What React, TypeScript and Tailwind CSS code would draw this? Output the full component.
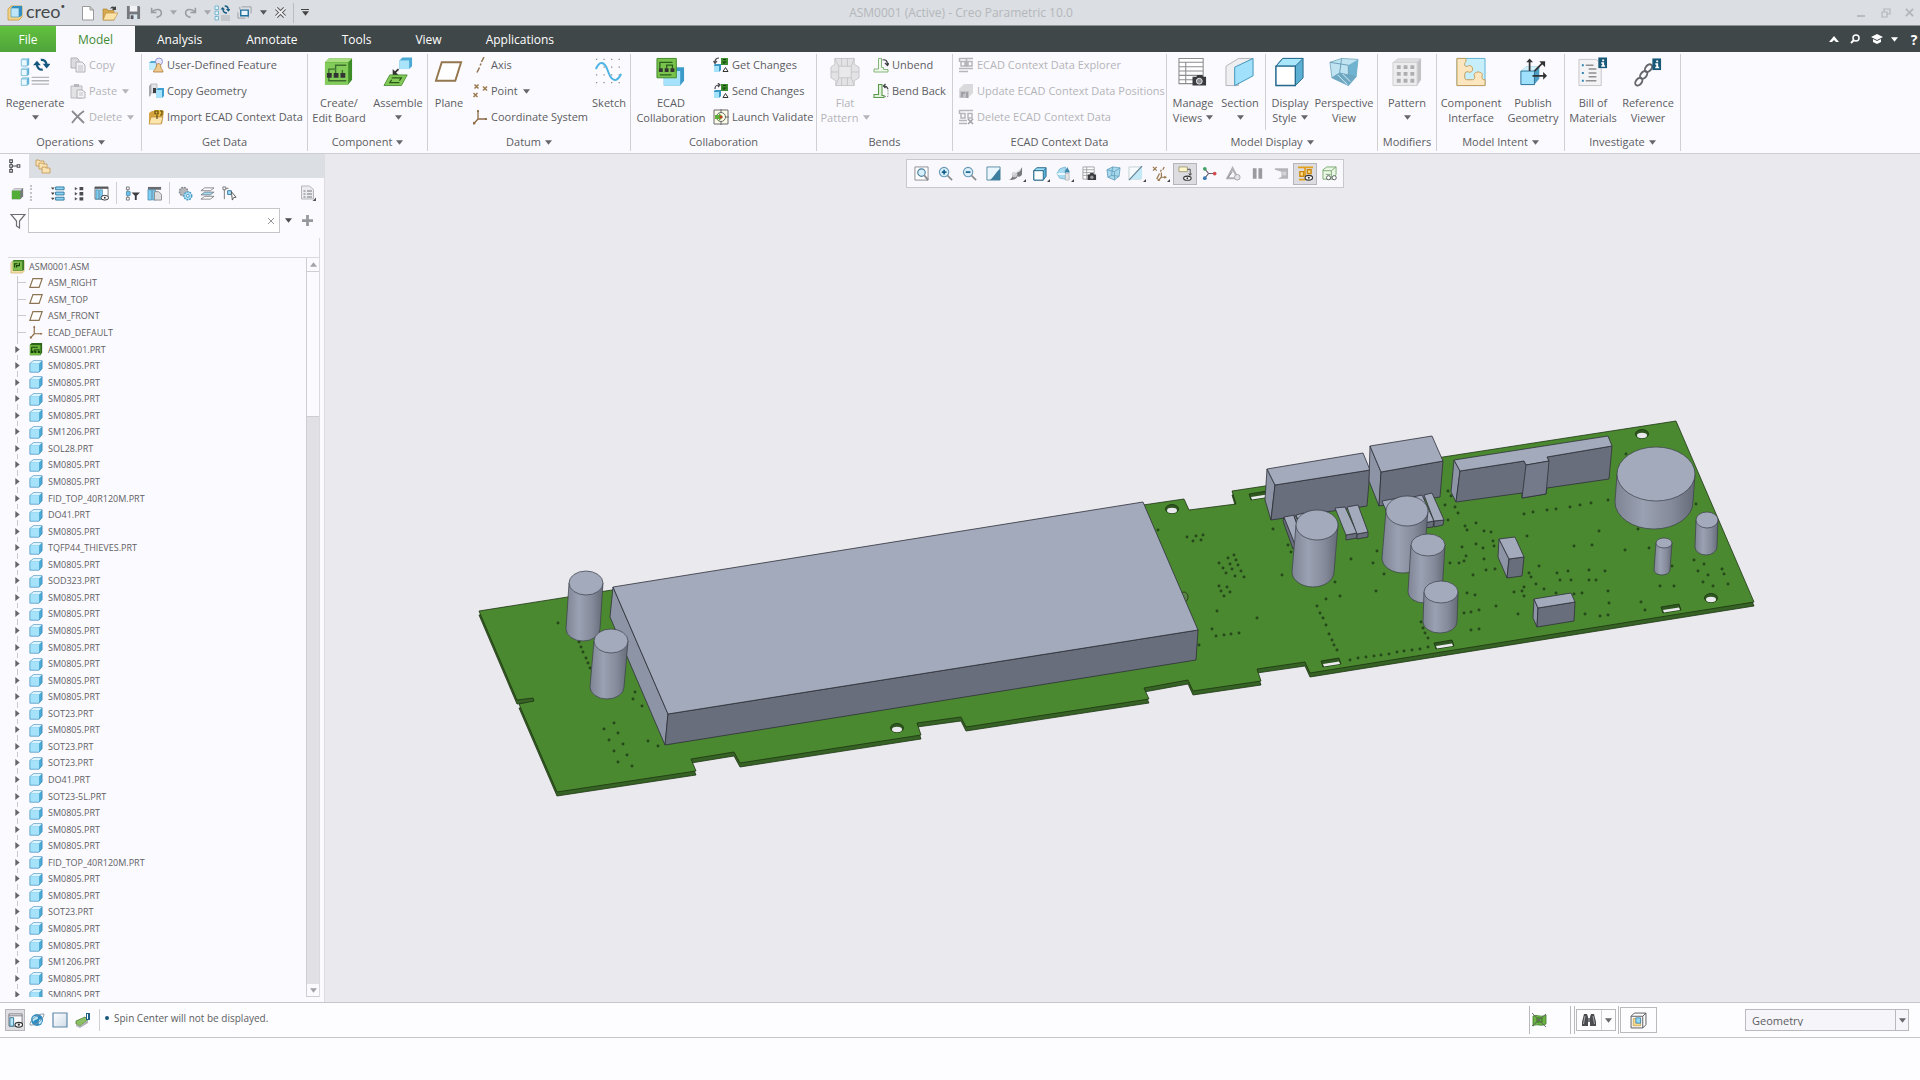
import { useState, type ReactNode } from 'react'
import clsx from 'clsx'

const paths: Record<string, ReactNode> = {
  logo: (
    <>
      <path d="M1 4l3-3h11v11l-3 3H1z" fill="#f3d48a" stroke="#c79a3e" strokeWidth=".8" />
      <path d="M4 3l2-2h9v9l-2 2H4z" fill="#2f8fc4" />
      <path d="M4 3h8v9H4z" fill="#bfe6f8" stroke="#3b8fbb" strokeWidth=".6" />
    </>
  ),
  newDoc: <path d="M2.500 1.500h7.500l3.500 3.500v10H2.500zM10 1.500v3.500h3.500" fill="#fff" stroke="#999" strokeWidth="1" />,
  open: (
    <>
      <path d="M1 15V4h4l1 1.500h6V15z" fill="#d9a94e" stroke="#a8792c" strokeWidth=".6" />
      <path d="M1 15l3-7h12l-4 7z" fill="#fbe3a8" stroke="#b98a3a" strokeWidth=".6" />
      <path d="M8 4c1-3 3-3 5-2l1-1v4h-4l1.200-1.200C10 3 9 3 8 4z" fill="#444" />
    </>
  ),
  save: (
    <>
      <path d="M1 1h13l1 1v13H1z" fill="#77797f" />
      <path d="M4 1h8v6H4z" fill="#f2f3f6" />
      <path d="M4 10h8v5H4z" fill="#d7e5ef" />
      <path d="M5 11h3v4H5z" fill="#55575c" />
    </>
  ),
  undo: <path d="M2 2v6h6M2.500 7.500C6 3 14 3 14 8.500c0 3-2.500 4.500-6 5.500" fill="none" stroke="#9a9da1" strokeWidth="2" />,
  redo: <path d="M14 2v6H8M13.500 7.500C10 3 2 3 2 8.500c0 3 2.500 4.500 6 5.500" fill="none" stroke="#9a9da1" strokeWidth="2" />,
  regenSmall: (
    <>
      <path d="M1 1h3.500v3.500H1zM1 6.200h3.500v3.500H1zM1 11.500h3.500V15H1z" fill="#e0f5fd" stroke="#62a7c8" strokeWidth=".8" />
      <path d="M7 11h9M7 13h9M7 15h9" stroke="#a9abaf" strokeWidth=".9" />
      <path d="M6.500 4.500h4.500L8.700 2zM16.500 4h-4.500l2.300 2.800z" fill="#155d85" />
      <path d="M9 4c0 3 2 4 4 4M14.200 4.500c0-3-1.500-3.500-3.500-3.500" fill="none" stroke="#155d85" strokeWidth="1.400" />
    </>
  ),
  windows: (
    <>
      <path d="M5 2h10v7M1 8v6h8" fill="none" stroke="#9b9ea3" />
      <path d="M3 2v3M12 11v3" stroke="#9b9ea3" />
      <path d="M4 5.500h8v6H4z" fill="#e8f6fc" stroke="#20709c" strokeWidth="1.500" />
    </>
  ),
  closeWin: (
    <>
      <path d="M2 2l12 12M14 2L2 14" stroke="#5a5b5f" strokeWidth="5.500" />
      <path d="M1.500 1.500l13 13M14.500 1.500l-13 13" stroke="#f0f1f3" strokeWidth="2.600" />
    </>
  ),
  copy: (
    <>
      <path d="M1 1h6l2 2v8H1z" fill="#dcdce0" stroke="#b2b2b6" />
      <path d="M6 5h6l3 3v7H6z" fill="#f0f0f3" stroke="#b2b2b6" />
      <path d="M8 9h5M8 11h5M8 13h5" stroke="#c2c2c6" />
    </>
  ),
  paste: (
    <>
      <path d="M1 3h11v12H1z" fill="#e2e2e5" stroke="#bbbbbf" />
      <path d="M4 1h5v3H4z" fill="#b8b8bc" />
      <path d="M7 7h5l3 2v6H7z" fill="#f3f3f6" stroke="#b2b2b6" />
      <path d="M9 10h4M9 12h4" stroke="#c2c2c6" />
    </>
  ),
  del: <path d="M2 2l12 12M14 2c-3 2-9 8-12 12" stroke="#8b8b8f" strokeWidth="1.800" fill="none" />,
  udf: (
    <>
      <path d="M1 6l2-2h7v7l-2 2H1z" fill="#52a9d4" />
      <path d="M1 6h7v7H1z" fill="#c2ebfb" />
      <circle cx="11" cy="4.500" r="3.500" fill="#e6e6fb" stroke="#7d7fc0" strokeWidth=".8" />
      <path d="M5.500 15c0-2 2-2.500 2.500-4.500C8.500 7.500 9 6.500 10.500 6.500s2 1 2.500 4c.5 2 2 2.500 2 4.500z" fill="#efc98e" stroke="#a97a35" strokeWidth=".8" />
    </>
  ),
  copyGeom: (
    <>
      <path d="M1 3l2-2v11l-2 2z" fill="#a7a9ad" />
      <path d="M3 1h6v9H3z" fill="#e3e4e8" stroke="#a7a9ad" strokeWidth=".7" />
      <path d="M5 5h3v5H5z" fill="#3d3f43" />
      <path d="M8 7l2-2h6v8l-2 2H8z" fill="#3f9fcf" />
      <path d="M8 7h6v8H8z" fill="#a6e2fb" />
    </>
  ),
  importEcad: (
    <>
      <path d="M1 15V4l3-2h12l-2 13z" fill="#d5a33f" />
      <path d="M1 15l2-7h12l-2 7z" fill="#fbe5ad" stroke="#b98a3a" strokeWidth=".7" />
      <path d="M6 1h9v6H6z" fill="#e8b93c" />
      <path d="M7 2h3v3H7zM12 2h2v4h-2M9 6v4" fill="none" stroke="#5d4a15" strokeWidth="1.200" />
    </>
  ),
  axis: <path d="M12 0L9.500 5M9 6.500l-.8 2M7.500 10.500L5 15.500" stroke="#94754f" strokeWidth="1.500" />,
  point: (
    <path
      d="M2.500 1.500l4 4M6.500 1.500l-4 4M11 3.500l4 4M15 3.500l-4 4M1.500 10l4 4M5.500 10l-4 4"
      stroke="#9b7a50"
      strokeWidth="1.500"
    />
  ),
  csys: (
    <>
      <path d="M6 1v9h9M6 10l-4.500 5" fill="none" stroke="#8b6a45" strokeWidth="1.300" />
      <path d="M4.800 3L6 .5 7.200 3M13 8.800L15.500 10 13 11.200M1 12.500v3l3-.4" fill="#8b6a45" />
    </>
  ),
  getChanges: (
    <>
      <path d="M8 1h7v7H8z" fill="#3f8f2e" />
      <path d="M10 2.500h3M9.500 5h4M11 5v2" stroke="#123c0a" />
      <path d="M6 1C3 1 2 3 2 5M.5 4L2 6.500 4 4" fill="none" stroke="#444" strokeWidth="1.200" />
      <path d="M1 8l1-1h6v6l-2 2H1z" fill="#3a98c5" />
      <path d="M1 9h5v6H1z" fill="#a6e2fb" />
      <path d="M10 14.500l2.500-4 2.500 4z" fill="#fff" stroke="#333" />
    </>
  ),
  sendChanges: (
    <>
      <path d="M8 1h7v7H8z" fill="#3f8f2e" />
      <path d="M10 2.500h3M9.500 5h4M11 5v2" stroke="#123c0a" />
      <path d="M2 6c0-3 1-4 4-4M5 0l2 2-2 2" fill="none" stroke="#444" strokeWidth="1.200" />
      <path d="M1 8l1-1h6v6l-2 2H1z" fill="#3a98c5" />
      <path d="M1 9h5v6H1z" fill="#a6e2fb" />
      <path d="M10 14.500l2.500-4 2.500 4z" fill="#fff" stroke="#333" />
    </>
  ),
  validate: (
    <>
      <path d="M1 1h14v14H1z" fill="#fbfbe8" stroke="#6a6b6e" />
      <circle cx="8" cy="8" r="4.500" fill="none" stroke="#6a6b6e" />
      <path d="M8 0v4M8 12v4M12 8h4" stroke="#6a6b6e" />
      <path d="M2 6h4V4l4 4-4 4v-2H2z" fill="#5fae35" />
      <circle cx="8" cy="8" r="1.500" fill="#c23b22" />
    </>
  ),
  unbend: (
    <>
      <path d="M5.500 1.500h3v9h2v2h4.500v2.500H1V12h4.500z" fill="#eef8eb" stroke="#86b57a" strokeWidth="1" />
      <path d="M9.500 3c3-1 5 1 5 4.500M12 6l2.500 2.500L16 6" fill="none" stroke="#3d3f43" strokeWidth="1.200" />
    </>
  ),
  bendBack: (
    <>
      <path d="M5.500 1.500h3.500v11h2v2H1V11.500h4.500z" fill="#e2f3dd" stroke="#5c9a4b" strokeWidth="1.100" />
      <path d="M11 13.500h4V6" fill="none" stroke="#9a9b9f" strokeDasharray="2 1" />
      <path d="M15 6c-1-3-3-3-4-3M12.500 1l-2 2 2 2" fill="none" stroke="#3d3f43" strokeWidth="1.200" />
    </>
  ),
  ecadExplorer: (
    <path d="M1 1.500h14M1.500 1v4M3 4.500h4v4.500H3zM10 4.500h4v4.500h-4zM8.500 1v9M1 11.500h14M1 14.500h9" fill="none" stroke="#b6b6ba" strokeWidth="1.500" />
  ),
  ecadUpdate: (
    <>
      <path d="M1 6l5-5h9v9l-5 5H1z" fill="#dadadd" />
      <path d="M2 8h9v7H2z" fill="#c3c3c7" />
      <path d="M4 14v-4h3M9 9v6" stroke="#98989c" strokeWidth="1.500" fill="none" />
    </>
  ),
  ecadDelete: (
    <>
      <path d="M1 1.500h14M1.500 1v4M3 4.500h4v4.500H3zM10 4.500h4v4.500h-4zM1 11.500h8M1 14.500h8" fill="none" stroke="#b6b6ba" strokeWidth="1.500" />
      <path d="M10 10l5 5M15 10l-5 5" stroke="#a2a2a6" strokeWidth="1.600" />
    </>
  ),
  tree: <path d="M2 1h3v3H2zM2 6.500h3v3H2zM2 12h3v3H2zM3.500 4v2.500M3.500 9.500V12M5 8h5M10.500 6.500h3v3h-3z" fill="none" stroke="#4a4b4f" strokeWidth="1.200" />,
  folders: (
    <g fill="#fae3b2" stroke="#bf9450" strokeWidth=".8">
      <path d="M1 2h3l1 1h4v5H1z" />
      <path d="M4 5h3l1 1h4v5H4z" />
      <path d="M7 9h3l1 1h4v5H7z" />
    </g>
  ),
  greenCube: (
    <>
      <path d="M2 5l3-3h9v9l-3 3H2z" fill="#77797c" />
      <path d="M4.500 2.500h9L11 5H2z" fill="#d4d5d8" />
      <path d="M2 5h9v9H2z" fill="#52ad37" />
    </>
  ),
  expandList: (
    <>
      <path d="M6 1h9v3H6zM6 6.500h9v3H6zM6 12h9v3H6z" fill="#8fd5f5" stroke="#31789c" />
      <path d="M1 1.500h4L3 4zM1 7h4L3 9.500zM1 12.500h4L3 15z" fill="#444" />
    </>
  ),
  collapseList: (
    <>
      <path d="M8 1h4v3.500H8zM8 6.500h4V10H8zM8 12h4v3.500H8z" fill="#4b4c50" />
      <path d="M3 1v3.500L6 3zM3 6.500V10l3-1.700zM3 12v3.500l3-1.800z" fill="#555" />
    </>
  ),
  columns: (
    <>
      <path d="M1 1h14v13H1z" fill="#fff" stroke="#777" />
      <path d="M1 1h14v2H1z" fill="#55565a" />
      <path d="M2 4h3v10H2zM6 4h3v10H6z" fill="#7fcdf2" stroke="#31789c" strokeWidth=".6" />
      <ellipse cx="11.500" cy="12.500" rx="4" ry="2.500" fill="#fff" stroke="#333" />
      <circle cx="11.500" cy="12.500" r="1" fill="#333" />
    </>
  ),
  treeFilter: (
    <>
      <path d="M1.500 1h3v3h-3zM1.500 12h3v3h-3zM3 4v2M3 10v2" fill="none" stroke="#777" />
      <path d="M1.500 6h4v4h-4z" fill="#6cc5ef" stroke="#31789c" strokeWidth=".7" />
      <path d="M7 7h9l-3.500 3.500V15h-2v-4.500z" fill="#3c3d40" />
    </>
  ),
  columnsDoc: (
    <>
      <path d="M1 1h14v3H1z" fill="#6a6b6f" />
      <path d="M1 4h4v11H1zM6 4h3v11H6z" fill="#7fcdf2" stroke="#31789c" strokeWidth=".6" />
      <path d="M8 6h4.500l3 3v6H8z" fill="#dededf" stroke="#8b8c90" />
    </>
  ),
  gears: (
    <>
      <circle cx="6" cy="6" r="4.500" fill="#b4b6ba" stroke="#85878b" strokeDasharray="2 1" strokeWidth="1.500" />
      <circle cx="10.500" cy="10.500" r="4.200" fill="#a8def6" stroke="#4c9bc2" strokeDasharray="2 1" strokeWidth="1.500" />
      <circle cx="10.500" cy="10.500" r="1.500" fill="#fff" stroke="#4c9bc2" />
    </>
  ),
  layers: (
    <g stroke="#7b7d81" strokeWidth=".9">
      <path d="M1 14l4-3h10l-4 3z" fill="#fff" />
      <path d="M1 9.500l4-3h10l-4 3z" fill="#9fdcf7" />
      <path d="M1 5l4-3h10l-4 3z" fill="#fff" />
    </g>
  ),
  branch: (
    <>
      <path d="M1 1h3v3H1zM2.500 4v10M4 2.500h3" fill="none" stroke="#777" />
      <path d="M6 5h4v4H6z" fill="#a6e2fb" stroke="#31789c" />
      <path d="M10 6l5 6-2.500.3L11 15z" fill="#fff" stroke="#555" />
    </>
  ),
  settingsDoc: (
    <>
      <path d="M1.500 1h8l4 3.500V14h-12z" fill="#ececef" stroke="#b6b7bb" />
      <path d="M3.500 6h2M3.500 9h2M3.500 12h2M7 6h5M7 9h5M7 12h5" stroke="#9c9da1" strokeWidth="1.300" />
      <path d="M16 12.500V16h-3.500z" fill="#555" />
    </>
  ),
  funnel: <path d="M1 1.500h14L9.500 8v7L6.500 13V8z" fill="#fdfdfe" stroke="#6b6d71" strokeWidth="1.200" />,
  asm: (
    <>
      <path d="M1 4l2-2h12v11l-2 2H1z" fill="#f5dfa6" stroke="#c3a25a" strokeWidth=".6" />
      <path d="M3 2l1-1h11v10l-1.500 1.500H3z" fill="#3c7a28" />
      <path d="M3 2.500h10v9.500H3z" fill="#7cbc4b" />
      <path d="M5 9V5h3M7 9V7h3V4" stroke="#173d0d" strokeWidth="1.200" fill="none" />
    </>
  ),
  board: (
    <>
      <path d="M1 3l2-2h12v11l-2 3H1z" fill="#2d661b" />
      <path d="M1 3.500h12V15H1z" fill="#6db53c" />
      <path d="M3 12V6h7M6 12V9h6" stroke="#16400b" strokeWidth="1.100" fill="none" />
      <path d="M2 10h3v2.500H2zM6.500 10h2v2.500h-2zM10 10h2.500v2.500H10z" fill="#16400b" />
    </>
  ),
  part: (
    <>
      <path d="M1 5l4-3h10v9l-3.500 4H1z" fill="#4ba9d6" stroke="#3786b0" strokeWidth=".7" />
      <path d="M1.500 5L5 2.400h9.500L11.500 5z" fill="#d9f4fe" />
      <path d="M1.500 5h10v9.600h-10z" fill="#a7e2fb" />
    </>
  ),
  plane: <path d="M4.500 3h10.500l-3.500 10H1z" fill="#fff" stroke="#8b7452" strokeWidth="1.400" />,
  zoomFit: (
    <>
      <path d="M1 1h14v14H1z" fill="#fff" stroke="#8b8c90" />
      <circle cx="8" cy="7" r="4" fill="#d6effa" stroke="#4a7f9e" strokeWidth="1.200" />
      <path d="M11 10l4 5" stroke="#8b8c90" strokeWidth="2" />
    </>
  ),
  zoomIn: (
    <>
      <circle cx="6.500" cy="6.500" r="5" fill="#d9f0fb" stroke="#6a98b3" strokeWidth="1.200" />
      <path d="M4 6.500h5M6.500 4v5" stroke="#17608a" strokeWidth="1.800" />
      <path d="M10 10l5 5" stroke="#8f9094" strokeWidth="2" />
    </>
  ),
  zoomOut: (
    <>
      <circle cx="6.500" cy="6.500" r="5" fill="#d9f0fb" stroke="#6a98b3" strokeWidth="1.200" />
      <path d="M4 6.500h5" stroke="#17608a" strokeWidth="1.800" />
      <path d="M10 10l5 5" stroke="#8f9094" strokeWidth="2" />
    </>
  ),
  repaint: (
    <>
      <path d="M1 1h14v14H1z" fill="#e9f7fd" stroke="#5c8ba5" />
      <path d="M15 3v12H4c4-2 5-7 11-12z" fill="#3c7f9f" />
    </>
  ),
  render: (
    <>
      <path d="M15 1v7c0 3-3 4-5 3 0 3-6 5-9 3 3 0 3-2 4-4 2-4 7-2 10-9z" fill="#77797d" />
      <circle cx="7" cy="9" r="3" fill="#c9cacd" />
      <path d="M5 9c2-3 6-2 8-5" stroke="#e4e4e7" strokeWidth="1.500" fill="none" />
    </>
  ),
  shade: (
    <>
      <path d="M2 5l3-3h10v9l-3 4H2z" fill="#5db2d8" stroke="#23678a" />
      <path d="M2 5l3-3h10l-3 3z" fill="#9fe0f9" stroke="#23678a" strokeWidth=".7" />
      <path d="M2 5h10v10H2z" fill="#fff" stroke="#23678a" />
    </>
  ),
  saved: (
    <>
      <path d="M1 8l3-5 6-2v13l-6-1z" fill="#a9dcf2" stroke="#6cb0cf" strokeWidth=".8" />
      <path d="M9 7l3-6 3 6z" fill="#3e86ab" />
      <path d="M1 7.500h9v2H2z" fill="#eaf8fe" />
      <path d="M10 8h4v7h-4z" fill="#e4e4e7" stroke="#a9aaae" strokeWidth=".7" />
    </>
  ),
  viewMgr: (
    <>
      <path d="M1 1h12v13H1zM1 4h12M1 7h12M1 10h12M5 1v13" fill="#fff" stroke="#a3a4a8" strokeWidth="1" />
      <path d="M6 9h2l1-1.500h3L13 9h2v6H6z" fill="#3a3b3e" />
      <circle cx="10.500" cy="12" r="1.800" fill="#9b9ca0" />
    </>
  ),
  persp: (
    <>
      <path d="M1 4l6-3 8 1-1 9-5 4-7-3z" fill="#a8d8ec" stroke="#5a9ab8" strokeWidth=".8" />
      <path d="M1 4l8 2 6-4M9 6v9M7 1l-1 9-4 2M6 10l8 1" fill="none" stroke="#5a9ab8" strokeWidth=".8" />
    </>
  ),
  planeDisp: (
    <>
      <path d="M1 1h13v13H1z" fill="#f7fbfd" stroke="#b9c5cb" strokeWidth=".8" />
      <path d="M15 1v12l-4 1L2 14z" fill="#c3e8f6" />
      <path d="M15 0L1 15" stroke="#5f8398" strokeWidth="1.200" />
    </>
  ),
  datums: (
    <>
      <path d="M1 1l4 4M5 1L1 5M10 4l-1 2M8 8L5 14M13 1l-1.500 3M10 7v5h5M10 12l-3 3" fill="none" stroke="#97764b" strokeWidth="1.300" />
      <path d="M13 10.500l3 1.500-3 1.500zM6 13v3h3z" fill="#97764b" />
    </>
  ),
  annot: (
    <>
      <path d="M1 1h9v5H1z" fill="#fff6cc" stroke="#a2a07f" />
      <path d="M10 3.500h3v6M11.500 8l1.500 2 1.500-2" fill="none" stroke="#444" />
      <ellipse cx="10" cy="13" rx="4" ry="2.200" fill="#fff" stroke="#333" strokeWidth="1.200" />
      <circle cx="10" cy="13" r="1" fill="#333" />
    </>
  ),
  spin: (
    <>
      <path d="M3 3l4 5 6 0M7 8l-4 5" stroke="#6a5c6c" strokeWidth="1.200" fill="none" />
      <circle cx="3" cy="3" r="2" fill="#3fa264" />
      <circle cx="13.500" cy="8" r="2" fill="#d34d4d" />
      <circle cx="3" cy="13" r="2" fill="#3c76b3" />
    </>
  ),
  simulate: (
    <>
      <path d="M1.500 13L7 2.500 12.500 13z" fill="none" stroke="#b0b0b4" strokeWidth="2.200" />
      <path d="M1.500 13L7 6" stroke="#8f8f93" />
      <circle cx="12" cy="12" r="3" fill="#e4e4e7" stroke="#a3a3a7" />
    </>
  ),
  pause: <path d="M3 2.500h4v11H3zM9 2.500h4v11H9z" fill="#9b9b9f" />,
  play: (
    <>
      <path d="M1 2.500h14v11H4l4-2V6L1 4z" fill="#b6b6ba" />
      <path d="M9 6h4v4H9z" fill="#d6d6d9" />
    </>
  ),
  ecadOn: (
    <>
      <path d="M0 1.500h16M1 14.500h7M7.500 1v10" stroke="#e2a01c" strokeWidth="1.800" />
      <path d="M2 6h4v5H2zM10 4h4v4h-4z" fill="#fde38b" stroke="#cd860e" strokeWidth="1.500" />
      <ellipse cx="11.500" cy="12.500" rx="4" ry="2.500" fill="#fff" stroke="#333" strokeWidth="1.200" />
      <circle cx="11.500" cy="12.500" r="1.100" fill="#333" />
    </>
  ),
  review: (
    <>
      <path d="M1 4l4-3h10v8l-3 5H1z" fill="#e9f5e5" stroke="#7dab71" />
      <path d="M1 5h9v8M10 5l5-4M4 9h5" fill="none" stroke="#7dab71" />
      <circle cx="7" cy="12.500" r="2.200" fill="#fff" stroke="#5b5c60" />
      <circle cx="13" cy="12.500" r="2.200" fill="#fff" stroke="#5b5c60" />
    </>
  ),
  navOn: (
    <>
      <path d="M1 1h14v13H1z" fill="#fbfbfd" stroke="#77797d" />
      <path d="M1 3h14" stroke="#77797d" />
      <path d="M2 5h4v9H2z" fill="#b9e3f6" stroke="#31789c" />
      <ellipse cx="11.500" cy="12.500" rx="4" ry="2.500" fill="#fff" stroke="#333" strokeWidth="1.200" />
      <circle cx="11.500" cy="12.500" r="1.200" fill="#333" />
    </>
  ),
  browser: (
    <>
      <circle cx="8" cy="8" r="6" fill="#2f8cc0" />
      <path d="M4 5c2-2 5-1 5 1s-3 1-4 3-2-2-1-4zM10 8c2-1 3 0 3 1s-2 4-3 3 0-2 0-4z" fill="#b7e6fa" />
      <path d="M1 13C0 9 9 1 15 2c0 5-8 12-14 11z" fill="none" stroke="#7e919d" strokeWidth=".9" />
    </>
  ),
  fullscreen: (
    <>
      <defs>
        <linearGradient id="fs" x1="0" y1="0" x2="1" y2="1">
          <stop offset="0" stopColor="#fff" />
          <stop offset="1" stopColor="#cfdbe8" />
        </linearGradient>
      </defs>
      <path d="M1 1h14v14H1z" fill="url(#fs)" stroke="#6087a6" strokeWidth="1.200" />
    </>
  ),
  scanner: (
    <>
      <path d="M1 9l9-4 3 3-8 6-4-2z" fill="#8cc065" stroke="#4f7f34" strokeWidth=".8" />
      <path d="M1 12l4 2 8-6v3l-8 5-4-2z" fill="#b0b2b5" />
      <path d="M11 1h4v7h-4z" fill="#1d5f86" />
      <path d="M12.500 2v5" stroke="#fff" />
    </>
  ),
  flag: (
    <>
      <path d="M2 4c4-2 8 2 13-1v9c-5 3-9-1-13 2z" fill="#6cb242" stroke="#3f7f2a" strokeWidth=".8" />
      <path d="M6 6h5v4H6z" fill="none" stroke="#2d6120" strokeWidth=".8" />
      <path d="M1 1l14 14M15 2L1 14" stroke="#5f6163" strokeWidth=".9" />
    </>
  ),
  binoc: (
    <>
      <path d="M3 2h3l1 3v9H1v-4zM13 2h-3L9 5v9h6v-4z" fill="#4b4c50" />
      <path d="M7 6h2v4H7z" fill="#77797d" />
      <path d="M4 4L2.500 12M12 4l1.500 8" stroke="#a9aaae" strokeWidth="1" />
    </>
  ),
  cubeBox: (
    <>
      <path d="M1 4l3-3h11v11l-3 3H1zM1 4h11v11M12 4l3-3" fill="#fff" stroke="#55565a" strokeWidth=".9" />
      <path d="M3 6h7v7H3z" fill="#f8d98c" stroke="#b88f38" strokeWidth=".6" />
      <path d="M5.500 5.500H10v5H5.500z" fill="#8fd8f8" stroke="#2b7ba5" strokeWidth=".7" />
    </>
  ),
}

const large: Record<string, ReactNode> = {
  regenerate: (
    <>
      {[0, 10, 20].map(y => (
        <g key={y}>
          <path d={`M1 ${y + 2}l2-1.500h6.500V${y + 7.500}l-2 1.500H1z`} fill="#5fb3d9" />
          <path d={`M1 ${y + 2}l2-1.500h6.500l-2 1.500z`} fill="#b4dced" />
          <path d={`M1.300 ${y + 2.300}h6V${y + 8.700}h-6z`} fill="#e9f9ff" stroke="#7db9d4" strokeWidth=".7" />
        </g>
      ))}
      <path d="M12 20.500h18M12 24h18M12 27.500h18" stroke="#b4b5b9" strokeWidth="1.400" />
      <path d="M17.500 7c0 4 3 6 6 5.500M27.500 8c0-4-3-6-6-5.500" fill="none" stroke="#14587e" strokeWidth="2.400" />
      <path d="M13.500 8h8l-4-4.500zM23.500 6.500h8l-4 5z" fill="#14587e" />
    </>
  ),
  createBoard: (
    <>
      <path d="M1 5l4-4h24v22l-4 5H1z" fill="#3d8c27" />
      <path d="M1 5l4-4h24l-4 4z" fill="#a8de7e" />
      <path d="M1 5h24v23H1z" fill="#84cc59" />
      <path d="M5 17v-5h7V8h11M12 17v-4M19 17v-4M5 20v4h18" fill="none" stroke="#3c6f2d" strokeWidth="1.400" />
      <path d="M3 16h5v5H3zM10 16h5v5h-5zM17 16h5v5h-5z" fill="#333" />
    </>
  ),
  assemble: (
    <>
      <path d="M17 3l3-3h10v9l-3 3H17z" fill="#4ba9d6" />
      <path d="M17 3h10v9H17z" fill="#aae4fb" />
      <path d="M16 12l-4 4" stroke="#333" strokeWidth="1.800" />
      <path d="M10 12v6h6z" fill="#333" />
      <path d="M7 18h18l-6 11H1z" fill="#83c957" stroke="#3a8124" strokeWidth=".8" />
      <path d="M9 21h10l-2 3M17 26H7l2-3" fill="none" stroke="#285a19" strokeWidth="1.300" />
    </>
  ),
  plane: <path d="M8 5h20l-6 19H2z" fill="#fff" stroke="#94774f" strokeWidth="2" />,
  sketch: (
    <>
      <path d="M2 2h27M2 10h27M2 18h27M2 26h27" stroke="#8b8c90" strokeWidth="1.300" strokeDasharray="1.300 6.500" />
      <path d="M2 12C6 2 11 5 14 13s5 11 9 10c3-1 4-4 5-6" fill="none" stroke="#4fb4e4" strokeWidth="2" />
    </>
  ),
  ecadCollab: (
    <>
      <path d="M8 14l4-4h17v14l-4 5H8z" fill="#3d9bc9" />
      <path d="M8 14h17v15H8z" fill="#a6e2fb" />
      <path d="M1 1h20v20H1z" fill="#79c34c" stroke="#3f8a29" />
      <path d="M4 11V5h13M11 11V8h6v3M4 18h12" fill="none" stroke="#2a5f1c" strokeWidth="1.300" />
      <path d="M3 11h4v4H3zM9 11h4v4H9zM15 11h4v4h-4z" fill="#333" />
    </>
  ),
  flat: (
    <g fill="#e3e3e6" stroke="#c6c6ca">
      <path d="M5 1h20v6l5 3v11l-5 3v5H6v-5l-5-3V10l4-3z" />
      <path d="M9 9h13v12H9zM9 9L5 1M22 9l3-8M9 21l-3 8M22 21l3 8M12 1v8M18 1v8M12 21v8M18 21v8M1 15h8M22 15h8" fill="#e9e9ec" />
    </g>
  ),
  manageViews: (
    <>
      <path d="M1 1h25v26H1zM1 5h25M1 9.500h25M1 14h25M1 18.500h25M1 23h25M8 5v22" fill="#fff" stroke="#8b8c90" strokeWidth="1.100" />
      <path d="M15 20h4l1-2h5l1 2h3v9H15z" fill="#3a3b3e" />
      <circle cx="22" cy="24.500" r="3" fill="#8f9094" stroke="#e8e8ea" />
    </>
  ),
  section: (
    <>
      <path d="M1 9l13-8 15 0-15 9v19H1z" fill="#efeff2" stroke="#b3b4b8" />
      <path d="M10 10L29 1v18L10 29z" fill="#a2e1fb" stroke="#3f93bb" />
    </>
  ),
  display: (
    <>
      <path d="M1 9l7-8h21v20l-8 8H1z" fill="#5cafd3" stroke="#246a8f" />
      <path d="M1 9l7-8h21l-8 8z" fill="#a9e6fc" stroke="#246a8f" />
      <path d="M1 9h20v20H1z" fill="#fff" stroke="#246a8f" strokeWidth="1.400" />
    </>
  ),
  perspective: (
    <>
      <path d="M1 5L13 1l17 1-2 18-8 9L3 21z" fill="#bfe3f1" stroke="#7fb0c6" />
      <path d="M20 8L30 2l-2 18-8 9z" fill="#6fb3d0" />
      <path d="M1 5l19 3v21M13 1l-2 15-8 5M11 16l17 4" fill="none" stroke="#6c9fb7" />
      <path d="M3 21l8-5 17 4-8 9z" fill="#6da7c1" />
      <path d="M9 18l10 10M14 17l8 8" stroke="#d7eef7" />
    </>
  ),
  pattern: (
    <>
      <path d="M1 5l5-4h24v22l-4 6H1z" fill="#c2c2c5" />
      <path d="M1 5l5-4h24l-4 4z" fill="#dedee1" />
      <path d="M1 5h25v24H1z" fill="#ececee" stroke="#cfcfd2" />
      {[8, 15, 22].map(y => (
        <path key={y} d={`M5 ${y}h4v4H5zM12 ${y}h4v4h-4zM19 ${y}h4v4h-4z`} fill="#aeaeb2" />
      ))}
    </>
  ),
  compInterface: (
    <>
      <path d="M1 1h29v28H1z" fill="#c6effb" stroke="#5fb0d2" />
      <path
        d="M1 1h9c1 2 0 4-1 5-1 2 1 4 3 3s4-1 5 2-2 5-4 4-4 0-4 3 0 5 2 5h6c2 0 3-2 2-4s1-4 4-4 5 2 4 4 0 4 3 4v6H1z"
        fill="#fbe6bf"
        stroke="#c49a55"
      />
    </>
  ),
  publish: (
    <>
      <path d="M3 14l6-5h13v13l-5 6H3z" fill="#4f9fc4" />
      <path d="M3 14l6-5h13l-5 5z" fill="#d2f0fb" />
      <path d="M3 14h14v14H3z" fill="#9fe1fc" stroke="#2e7396" />
      <path d="M12 14V3M17 14l9-9M15 19h14" stroke="#333" strokeWidth="1.800" />
      <path d="M8.500 5L12 1l3.500 4zM22 4h6v6zM26 15l4 4-4 4z" fill="#333" />
    </>
  ),
  bom: (
    <>
      <path d="M1 2h18l5 5v22H1z" fill="#f3f3f5" stroke="#c6c6ca" />
      <path d="M8 8h8M11 12h8M11 16h8M11 20h8M8 24h11" stroke="#8f9094" strokeWidth="1.500" />
      <path d="M4 7h2v2H4zM4 15h2v2H4zM4 23h2v2H4z" fill="#2f86b5" />
      <path d="M21 0h9v11h-9z" fill="#175777" />
      <path d="M25 2h2v2h-2zM24 5h3v3h1v1.500h-4V8h1V6.500h-1z" fill="#fff" />
    </>
  ),
  refViewer: (
    <>
      <g fill="none" stroke="#66676b" strokeWidth="2">
        <ellipse cx="6" cy="25" rx="4.500" ry="3" transform="rotate(-50 6 25)" />
        <ellipse cx="11" cy="18" rx="4.500" ry="3" transform="rotate(-50 11 18)" />
        <ellipse cx="16" cy="11" rx="4.500" ry="3" transform="rotate(-50 16 11)" />
      </g>
      <path d="M20 1h9v12h-9z" fill="#175777" />
      <path d="M24 3h2v2h-2zM23 6h3v3.500h1V11h-4V9.500h1v-2h-1z" fill="#fff" />
    </>
  ),
}

function Icon({ name, className = 'size-4' }: { name: string; className?: string }) {
  return (
    <svg viewBox="0 0 16 16" className={clsx('shrink-0', className)} aria-hidden="true">
      {paths[name]}
    </svg>
  )
}

function Caret({ className = 'text-[#66676b]' }: { className?: string }) {
  return (
    <svg viewBox="0 0 8 5" className={clsx('w-[7px] h-[5px] shrink-0', className)} aria-hidden="true">
      <path d="M0 0h8L4 5z" fill="currentColor" />
    </svg>
  )
}

interface BigProps {
  icon: string
  lines: string[]
  width: string
  caret?: 'inline' | 'below'
  disabled?: boolean
}

function BigButton({ icon, lines, width, caret, disabled }: BigProps) {
  return (
    <button
      disabled={disabled}
      className={clsx('flex shrink-0 flex-col items-center pt-[5px] whitespace-nowrap', width, disabled && 'text-[#b4b4b8]')}
    >
      <svg viewBox="0 0 31 30" className="size-[30px] shrink-0" aria-hidden="true">
        {large[icon]}
      </svg>
      <span className="mt-2 h-[15px] leading-[15px]">{lines[0]}</span>
      <span className="flex h-[15px] items-center gap-1 leading-[15px]">
        {lines[1]}
        {caret && <Caret className={disabled ? 'text-[#b4b4b8]' : 'text-[#66676b]'} />}
      </span>
    </button>
  )
}

function SmallButton({ icon, label, caret, disabled }: { icon: string; label: string; caret?: boolean; disabled?: boolean }) {
  return (
    <button
      disabled={disabled}
      className={clsx('flex h-[26px] items-center gap-[3px] whitespace-nowrap', disabled && 'text-[#b4b4b8]')}
    >
      <Icon name={icon} />
      <span>{label}</span>
      {caret && <Caret className={clsx('ml-0.5', disabled ? 'text-[#b4b4b8]' : 'text-[#66676b]')} />}
    </button>
  )
}

function Group({ label, width, caret, children }: { label: string; width: string; caret?: boolean; children: ReactNode }) {
  return (
    <section className={clsx('flex shrink-0', width)}>
      <div className="flex flex-1 flex-col">
        <div className="flex h-[78px]">{children}</div>
        <div className="flex h-[23px] items-center justify-center gap-1 pt-0.5">
          {label}
          {caret && <Caret />}
        </div>
      </div>
      <div className="my-0.5 w-px bg-[#cfcfd4]" />
    </section>
  )
}

function Ribbon() {
  return (
    <div className="flex h-[102px] shrink-0 overflow-hidden border-b border-[#cdced3] bg-[#fbfaff] text-[11px] text-[#5c5d61]">
      <Group label="Operations" width="w-[142px]" caret>
        <BigButton icon="regenerate" lines={['Regenerate']} width="w-[70px]" caret="below" />
        <div>
          <SmallButton icon="copy" label="Copy" disabled />
          <SmallButton icon="paste" label="Paste" caret disabled />
          <SmallButton icon="del" label="Delete" caret disabled />
        </div>
      </Group>
      <Group label="Get Data" width="w-[166px]">
        <div className="ml-1.5">
          <SmallButton icon="udf" label="User-Defined Feature" />
          <SmallButton icon="copyGeom" label="Copy Geometry" />
          <SmallButton icon="importEcad" label="Import ECAD Context Data" />
        </div>
      </Group>
      <Group label="Component" width="w-[120px]" caret>
        <BigButton icon="createBoard" lines={['Create/', 'Edit Board']} width="w-[62px]" />
        <BigButton icon="assemble" lines={['Assemble']} width="w-[56px]" caret="below" />
      </Group>
      <Group label="Datum" width="w-[203px]" caret>
        <BigButton icon="plane" lines={['Plane']} width="w-[42px]" />
        <div className="ml-0.5 flex-1">
          <SmallButton icon="axis" label="Axis" />
          <SmallButton icon="point" label="Point" caret />
          <SmallButton icon="csys" label="Coordinate System" />
        </div>
        <BigButton icon="sketch" lines={['Sketch']} width="w-[42px]" />
      </Group>
      <Group label="Collaboration" width="w-[186px]">
        <BigButton icon="ecadCollab" lines={['ECAD', 'Collaboration']} width="w-[80px]" />
        <div className="ml-0.5">
          <SmallButton icon="getChanges" label="Get Changes" />
          <SmallButton icon="sendChanges" label="Send Changes" />
          <SmallButton icon="validate" label="Launch Validate" />
        </div>
      </Group>
      <Group label="Bends" width="w-[136px]">
        <BigButton icon="flat" lines={['Flat', 'Pattern']} width="w-[56px]" caret="inline" disabled />
        <div>
          <SmallButton icon="unbend" label="Unbend" />
          <SmallButton icon="bendBack" label="Bend Back" />
        </div>
      </Group>
      <Group label="ECAD Context Data" width="w-[214px]">
        <div className="ml-[5px]">
          <SmallButton icon="ecadExplorer" label="ECAD Context Data Explorer" disabled />
          <SmallButton icon="ecadUpdate" label="Update ECAD Context Data Positions" disabled />
          <SmallButton icon="ecadDelete" label="Delete ECAD Context Data" disabled />
        </div>
      </Group>
      <Group label="Model Display" width="w-[211px]" caret>
        <BigButton icon="manageViews" lines={['Manage', 'Views']} width="w-[52px]" caret="inline" />
        <BigButton icon="section" lines={['Section']} width="w-[42px]" caret="below" />
        <div className="ml-1 mt-0.5 w-px bg-[#cfcfd4]" />
        <BigButton icon="display" lines={['Display', 'Style']} width="w-[48px]" caret="inline" />
        <BigButton icon="perspective" lines={['Perspective', 'View']} width="w-[60px]" />
      </Group>
      <Group label="Modifiers" width="w-[59px]">
        <BigButton icon="pattern" lines={['Pattern']} width="w-[58px]" caret="below" />
      </Group>
      <Group label="Model Intent" width="w-[128px]" caret>
        <BigButton icon="compInterface" lines={['Component', 'Interface']} width="w-[68px]" />
        <BigButton icon="publish" lines={['Publish', 'Geometry']} width="w-[56px]" />
      </Group>
      <Group label="Investigate" width="w-[116px]" caret>
        <BigButton icon="bom" lines={['Bill of', 'Materials']} width="w-[56px]" />
        <BigButton icon="refViewer" lines={['Reference', 'Viewer']} width="w-[54px]" />
      </Group>
    </div>
  )
}

function TitleBar() {
  const btn = 'flex items-center justify-center h-full'
  return (
    <header className="flex h-[26px] shrink-0 items-center border-b border-[#8f9396] bg-[#dbdee2] pl-[7px]">
      <Icon name="logo" />
      <span className="ml-[3px] w-[53px] pb-[3px] font-[Lato] text-[18px] leading-none text-[#46494c]">creo<span className="align-top text-[8px]">•</span></span>
      <button aria-label="New" className={clsx(btn, 'w-[18px]')}><Icon name="newDoc" /></button>
      <button aria-label="Open" className={clsx(btn, 'ml-1 w-[18px]')}><Icon name="open" /></button>
      <button aria-label="Save" className={clsx(btn, 'ml-1 w-[20px]')}><Icon name="save" className="size-[15px]" /></button>
      <button aria-label="Undo" className={clsx(btn, 'ml-1 w-[18px]')}><Icon name="undo" className="size-[13px]" /></button>
      <button aria-label="Undo list" className={clsx(btn, 'ml-0.5 w-3')}><Caret className="text-[#a4a7ab]" /></button>
      <button aria-label="Redo" className={clsx(btn, 'ml-0.5 w-[18px]')}><Icon name="redo" className="size-[13px]" /></button>
      <button aria-label="Redo list" className={clsx(btn, 'ml-0.5 w-3')}><Caret className="text-[#a4a7ab]" /></button>
      <button aria-label="Regenerate model" className={clsx(btn, 'w-[18px]')}><Icon name="regenSmall" /></button>
      <button aria-label="Windows" className={clsx(btn, 'ml-1 w-[18px]')}><Icon name="windows" className="size-[15px]" /></button>
      <button aria-label="Windows list" className={clsx(btn, 'ml-1 w-3')}><Caret className="text-[#55565a]" /></button>
      <button aria-label="Close window" className={clsx(btn, 'ml-0.5 w-[18px]')}><Icon name="closeWin" className="size-[11px]" /></button>
      <div className="ml-1 h-5 w-px bg-[#b9bcc0]" />
      <button aria-label="Customize" className={clsx(btn, 'ml-0.5 w-[18px] flex-col gap-px')}>
        <span className="h-px w-2 bg-[#444]" />
        <Caret className="text-[#444]" />
      </button>
      <h1 className="flex-1 pr-[240px] text-center text-[12px] text-[#b4b7bb]">ASM0001 (Active) - Creo Parametric 10.0</h1>
      <button aria-label="Minimize" className={clsx(btn, 'w-[25px]')}><span className="mt-1.5 h-0.5 w-2 bg-[#b9bbbe]" /></button>
      <button aria-label="Restore" className={clsx(btn, 'w-[25px]')}>
        <svg viewBox="0 0 10 10" className="size-[10px]"><path d="M1 4h5v5H1zM3 4V1h6v5H6" fill="none" stroke="#b4b7ba" strokeWidth="1.200" /></svg>
      </button>
      <button aria-label="Close" className={clsx(btn, 'w-[22px]')}>
        <svg viewBox="0 0 10 10" className="size-[9px]"><path d="M1 1l8 8M9 1L1 9" stroke="#b4b7ba" strokeWidth="2" /></svg>
      </button>
    </header>
  )
}

const menus = ['Analysis', 'Annotate', 'Tools', 'View', 'Applications']

function MenuBar() {
  return (
    <nav className="flex h-[26px] shrink-0 items-center bg-[#3f4749] text-[12px] font-medium text-white">
      <button className="h-full w-14 bg-gradient-to-b from-[#62c13e] to-[#4fa43a] pt-px">File</button>
      <button className="h-full w-[79px] bg-[#fbfaff] pt-px text-[#3f8a35]">Model</button>
      {menus.map(m => (
        <button key={m} className="h-full px-[22px] pt-px">{m}</button>
      ))}
      <div className="ml-auto flex items-center gap-[11px] pr-px">
        <button aria-label="Collapse ribbon">
          <svg viewBox="0 0 10 8" className="h-2 w-[10px]"><path d="M0 7l5-6 5 6H7L5 5 3 7z" fill="#fff" /></svg>
        </button>
        <button aria-label="Search commands">
          <svg viewBox="0 0 10 10" className="size-[10px]"><path d="M1 9l3-3" stroke="#fff" strokeWidth="2" /><circle cx="6" cy="4" r="3" fill="none" stroke="#fff" strokeWidth="1.500" /></svg>
        </button>
        <button aria-label="Learning" className="flex items-center gap-2">
          <svg viewBox="0 0 12 10" className="h-[10px] w-3"><path d="M0 3l6-3 6 3-6 3zM2 5l4 2 4-2v3L6 10 2 8z" fill="#fff" /></svg>
          <Caret className="text-white" />
        </button>
        <button aria-label="Help" className="w-2.5 text-center text-[14px] font-bold">?</button>
      </div>
    </nav>
  )
}

const tree = [
  ['plane', 'ASM_RIGHT'], ['plane', 'ASM_TOP'], ['plane', 'ASM_FRONT'], ['csys', 'ECAD_DEFAULT'], ['board', 'ASM0001.PRT'],
  ...[
    'SM0805', 'SM0805', 'SM0805', 'SM0805', 'SM1206', 'SOL28', 'SM0805', 'SM0805', 'FID_TOP_40R120M', 'DO41',
    'SM0805', 'TQFP44_THIEVES', 'SM0805', 'SOD323', 'SM0805', 'SM0805', 'SM0805', 'SM0805', 'SM0805', 'SM0805',
    'SM0805', 'SOT23', 'SM0805', 'SOT23', 'SOT23', 'DO41', 'SOT23-5L', 'SM0805', 'SM0805', 'SM0805',
    'FID_TOP_40R120M', 'SM0805', 'SM0805', 'SOT23', 'SM0805', 'SM0805', 'SM1206', 'SM0805', 'SM0805',
  ].map(n => ['part', `${n}.PRT`]),
]

function ModelTree() {
  const [query, setQuery] = useState('')
  const tool = 'flex w-[22px] justify-center'
  return (
    <aside className="flex w-[325px] shrink-0 flex-col border-r border-[#dcdce1] bg-[#fbfaff]">
      <div className="flex h-[24px] shrink-0 bg-[#dbdee2]">
        <button aria-label="Model Tree" className="flex w-[29px] items-center justify-center bg-[#fbfaff]"><Icon name="tree" className="size-[14px]" /></button>
        <button aria-label="Folder Browser" className="flex w-[27px] items-center justify-center"><Icon name="folders" /></button>
      </div>
      <div className="flex h-[30px] shrink-0 items-center pl-1.5 pr-2">
        <button aria-label="Show" className={tool}><Icon name="greenCube" className="size-[15px]" /></button>
        <span className="ml-0.5 h-4 border-l-2 border-dotted border-[#c3c4c8]" />
        <button aria-label="Expand" className={clsx(tool, 'ml-[14px]')}><Icon name="expandList" className="size-[15px]" /></button>
        <button aria-label="Collapse" className={tool}><Icon name="collapseList" className="size-[15px]" /></button>
        <button aria-label="Columns" className={tool}><Icon name="columns" className="size-[15px]" /></button>
        <span className="mx-1 h-[22px] w-px bg-[#cfcfd4]" />
        <button aria-label="Tree filters" className={tool}><Icon name="treeFilter" className="size-[15px]" /></button>
        <button aria-label="Tree columns" className={tool}><Icon name="columnsDoc" className="size-[15px]" /></button>
        <span className="mx-1 h-[22px] w-px bg-[#cfcfd4]" />
        <button aria-label="Settings" className={tool}><Icon name="gears" className="size-[15px]" /></button>
        <button aria-label="Layers" className={tool}><Icon name="layers" className="size-[15px]" /></button>
        <button aria-label="Select" className={tool}><Icon name="branch" className="size-[15px]" /></button>
        <button aria-label="Tree options" className="ml-auto"><Icon name="settingsDoc" /></button>
      </div>
      <div className="flex h-[25px] shrink-0 items-center pl-[10px]">
        <Icon name="funnel" />
        <div className="ml-0.5 flex h-[25px] w-[252px] items-center border border-[#c5c5ca] bg-white pr-1">
          <input
            aria-label="Filter tree"
            className="h-full min-w-0 flex-1 px-1 outline-none"
            value={query}
            onChange={e => setQuery(e.target.value)}
          />
          <button aria-label="Clear filter" onClick={() => setQuery('')}>
            <svg viewBox="0 0 8 8" className="size-2"><path d="M1 1l6 6M7 1L1 7" stroke="#95969a" /></svg>
          </button>
        </div>
        <button aria-label="Filter options" className="ml-[5px]"><Caret className="text-[#4c4d51]" /></button>
        <button aria-label="Add" className="ml-[10px]">
          <svg viewBox="0 0 12 12" className="size-[11px]"><path d="M6 0v12M0 6h12" stroke="#97989c" strokeWidth="3" /></svg>
        </button>
      </div>
      <div className="mr-1 mt-[5px] flex min-h-0 flex-1 flex-col pb-[5px] pl-2">
        <div className="h-5 shrink-0 border-b border-r border-[#d9d9de]" />
        <div className="flex min-h-0 flex-1 border-r border-[#d9d9de]">
          <ul className="relative flex-1 overflow-hidden text-[9px] leading-none text-[#5f6064]">
            <li className="absolute left-[9px] top-[18px] h-full w-px bg-[#c9c9ce]" />
            <li>
              <ul className="grid h-[745px] auto-rows-fr">
                <li className="flex items-center pl-0.5"><Icon name="asm" className="size-[15px]" /><span className="ml-1">ASM0001.ASM</span></li>
                {tree.map(([icon, name], i) => (
                  <li key={i} className="flex items-center">
                    {i < 4 ? (
                      <span className="ml-[9px] mr-[3px] h-px w-[9px] bg-[#c9c9ce]" />
                    ) : (
                      <button aria-label={`Expand ${name}`} className="relative ml-[7px] mr-[9px] bg-[#fbfaff] py-0.5">
                        <svg viewBox="0 0 5 8" className="h-[7px] w-[5px]"><path d="M0 0v8l5-4z" fill="#66676b" /></svg>
                      </button>
                    )}
                    <Icon name={icon} className="size-[14px]" />
                    <span className="ml-[5px]">{name}</span>
                  </li>
                ))}
              </ul>
            </li>
          </ul>
          <div className="flex w-[13px] shrink-0 flex-col border-l border-[#cdcdd2] bg-[#e1e0e5]">
            <button aria-label="Scroll up" className="flex h-[14px] items-center justify-center border-b border-[#cdcdd2] bg-[#fbfaff]"><Caret className="rotate-180 text-[#a2a3a7]" /></button>
            <div className="h-[145px] border-b border-[#cdcdd2] bg-[#fbfaff]" />
            <button aria-label="Scroll down" className="mt-auto flex h-[13px] items-center justify-center border-b border-[#cdcdd2] bg-[#fbfaff]"><Caret className="text-[#a2a3a7]" /></button>
          </div>
        </div>
      </div>
    </aside>
  )
}

// [top cx, top cy, rx, ry, bottom cx, bottom cy]
function Cylinder({ at }: { at: number[] }) {
  const [tx, ty, rx, ry, bx, by] = at
  return (
    <g stroke="#3b3e47" strokeWidth=".7">
      <path
        d={`M${tx - rx} ${ty}L${bx - rx} ${by}A${rx} ${ry} 0 0 0 ${bx + rx} ${by}L${tx + rx} ${ty}z`}
        fill="url(#cyl)"
      />
      <ellipse cx={tx} cy={ty} rx={rx} ry={ry} fill="#a2aabc" />
    </g>
  )
}

function Block({ top, front, side }: { top: string; front: string; side?: string }) {
  return (
    <g stroke="#2e3038" strokeWidth=".8" strokeLinejoin="round">
      {side && <polygon points={side} fill="#8d94a5" />}
      <polygon points={front} fill="#696e7c" />
      <polygon points={top} fill="#a2aabc" />
    </g>
  )
}

const outline =
  '479,611 612,590 1143,505 1184,499 1189,510 1236,504 1232,491 1265,486 1443,457 1676,421 1754,602 1310,673 1305,662 1257,669 1261,681 1193,691 1188,680 1144,688 1149,699 966,727 961,717 917,723 921,735 740,763 734,752 691,759 696,771 557,792 519,704 534,701 533,698 517,700'

const holes = [[1172, 509], [1642, 434], [1711, 598], [897, 728]]
const slots = [[1331, 662], [1444, 644], [1671, 608], [1259, 495]]

const vias = [
  [1187, 537], [1193, 541], [1196, 536], [1201, 540], [1203, 535], [1219, 563], [1223, 568], [1228, 558], [1234, 555],
  [1230, 564], [1236, 560], [1238, 565], [1226, 573], [1232, 569], [1241, 571], [1244, 577], [1235, 576], [1227, 587],
  [1219, 586], [1221, 591], [1230, 592], [1224, 596], [1217, 611], [1257, 618], [1212, 629], [1216, 636], [1224, 635], [1231, 634], [1239, 633],
  [1199, 645], [1158, 530], [1273, 529], [1288, 545], [1291, 552], [1282, 575], [1351, 559], [1335, 582], [1326, 599],
  [1340, 596], [1317, 606], [1320, 613], [1323, 618], [1326, 625], [1329, 634], [1332, 640], [1334, 645], [1337, 650],
  [1350, 660], [1358, 658], [1366, 657], [1374, 656], [1381, 655], [1389, 654], [1397, 652], [1404, 651], [1412, 650],
  [1420, 649], [1428, 647], [1428, 638], [1425, 633], [1423, 628], [1421, 622], [1376, 591], [1384, 574], [1373, 563],
  [1377, 551], [1448, 491], [1451, 496], [1455, 507], [1458, 513], [1445, 505], [1448, 520], [1465, 526], [1467, 530],
  [1476, 523], [1484, 531], [1491, 532], [1462, 547], [1476, 544], [1483, 548], [1494, 546], [1493, 541], [1466, 556],
  [1464, 561], [1459, 563], [1450, 563], [1484, 559], [1473, 575], [1486, 570], [1495, 569], [1467, 593], [1475, 595],
  [1464, 613], [1471, 612], [1479, 610], [1496, 606], [1471, 630], [1479, 629], [1518, 614], [1524, 596], [1524, 587],
  [1514, 592], [1522, 591], [1529, 573], [1531, 577], [1536, 584], [1544, 589], [1539, 566], [1527, 536], [1557, 573],
  [1568, 571], [1560, 580], [1571, 580], [1556, 593], [1582, 593], [1574, 594], [1589, 570], [1605, 571], [1589, 580],
  [1596, 580], [1608, 591], [1609, 603], [1585, 614], [1600, 616], [1608, 615], [1641, 602], [1645, 610], [1574, 546],
  [1592, 545], [1599, 531], [1625, 550], [1524, 514], [1533, 512], [1547, 510], [1556, 509], [1570, 507], [1580, 505],
  [1591, 503], [1608, 500], [1626, 454], [1638, 529], [1649, 548], [1672, 566], [1660, 586], [1674, 586], [1694, 560],
  [1704, 564], [1698, 571], [1708, 575], [1703, 582], [1713, 586], [1722, 569], [1724, 574], [1728, 584], [1696, 504],
  [558, 623], [579, 642], [581, 647], [583, 652], [586, 658], [588, 663], [590, 668], [635, 692], [633, 699], [642, 706],
  [614, 723], [604, 729], [618, 733], [609, 740], [623, 744], [614, 751], [627, 755], [618, 762], [632, 766], [648, 741], [658, 746],
]

function Scene() {
  return (
    <svg viewBox="325 154 1595 848" className="size-full" role="img" aria-label="Circuit board assembly">
      <defs>
        <linearGradient id="cyl">
          <stop offset="0" stopColor="#7e8494" />
          <stop offset=".35" stopColor="#9aa1b2" />
          <stop offset=".7" stopColor="#858b9b" />
          <stop offset="1" stopColor="#656a77" />
        </linearGradient>
      </defs>
      <g stroke="#1d3512" strokeWidth=".8" strokeLinejoin="round">
        <polygon points={outline} fill="#366325" transform="translate(0 4)" />
        <polygon points={outline} fill="#4b8930" />
        {holes.map(([x, y]) => (
          <g key={x}>
            <ellipse cx={x} cy={y} rx="6.500" ry="4.500" fill="#2f5720" />
            <ellipse cx={x} cy={y + 1.500} rx="5" ry="2.800" fill="#eae9ee" stroke="none" />
          </g>
        ))}
        {slots.map(([x, y]) => (
          <g key={x}>
            <path d={`M${x - 10} ${y - 1}l18-3 2 6-18 3z`} fill="#2f5720" />
            <path d={`M${x - 8} ${y + 2}l16-2.500 1 2.500-16 2.500z`} fill="#eae9ee" stroke="none" />
          </g>
        ))}
      </g>
      {vias.map(([x, y], i) => (
        <ellipse key={i} cx={x} cy={y} rx="1.500" ry="1.400" fill="#25491a" />
      ))}
      <ellipse cx="1184" cy="597" rx="4" ry="5" fill="#5a8447" stroke="#1d3512" strokeWidth=".8" />
      <Block
        side="613,587 668,714 665,745 610,617"
        front="668,714 1198,630 1196,660 665,745"
        top="613,587 1143,502 1198,630 668,714"
      />
      <Cylinder at={[586, 583, 17, 12, 583, 629]} />
      <Cylinder at={[611, 641, 17, 12, 607, 687]} />
      <Block side="1267,469 1275,485 1271,520 1265,500" front="1275,485 1370,470 1367,506 1271,520" top="1267,469 1363,453 1370,470 1275,485" />
      <Block side="1370,446 1381,472 1379,506 1369,481" front="1381,472 1443,461 1440,497 1379,506" top="1370,446 1432,436 1443,461 1381,472" />
      <Block
        side="1454,460 1460,471 1456,502 1451,492"
        front="1460,471 1524,461 1526,465 1549,461 1547,457 1612,446 1609,479 1547,488 1546,494 1522,498 1522,493 1456,502"
        top="1454,460 1608,436 1612,446 1547,457 1549,461 1526,465 1524,461 1460,471"
      />
      <path d="M1526 465l-4 33 24-4 3-33z" fill="#747a89" stroke="#2e3038" strokeWidth=".8" />
      <Block front="1284,517 1296,546 1293,549 1283,521" top="1284,517 1295,515 1308,544 1296,547" />
      <Block front="1294,516 1306,545 1316,543 1306,550" top="1296,515 1304,513 1316,541 1308,544" />
      <Block front="1346,535 1357,533 1357,538 1346,540" top="1335,508 1345,507 1357,533 1346,535" />
      <Block front="1357,534 1368,532 1368,537 1357,539" top="1347,507 1358,505 1368,532 1357,534" />
      <Block front="1390,520 1400,518 1400,523 1390,525" top="1382,501 1404,497 1412,516 1390,520" />
      <Block front="1423,523 1434,521 1433,527 1424,528" top="1413,497 1422,495 1434,521 1423,523" />
      <Block front="1434,521 1444,520 1443,525 1434,527" top="1424,495 1432,493 1444,520 1434,521" />
      <Cylinder at={[1317, 525, 21, 15, 1313, 572]} />
      <Cylinder at={[1407, 511, 21, 15, 1403, 558]} />
      <Cylinder at={[1428, 545, 17, 11, 1425, 592]} />
      <Cylinder at={[1441, 592, 17, 11, 1440, 622]} />
      <Cylinder at={[1656, 474, 39, 27, 1654, 502]} />
      <Cylinder at={[1707, 520, 11, 8, 1706, 547]} />
      <Cylinder at={[1664, 543, 8, 5, 1662, 570]} />
      <Block side="1499,539 1509,559 1507,578 1498,557" front="1509,559 1524,557 1522,576 1507,578" top="1499,539 1515,537 1524,557 1509,559" />
      <Block side="1534,599 1538,608 1537,627 1533,618" front="1538,608 1575,602 1574,621 1537,627" top="1534,599 1571,593 1575,602 1538,608" />
    </svg>
  )
}

const viewTools: [string, string][] = [
  ['zoomFit', 'Refit'], ['zoomIn', 'Zoom in'], ['zoomOut', 'Zoom out'], ['repaint', 'Repaint'], ['render', 'Rendering'],
  ['shade', 'Display style'], ['saved', 'Saved orientations'], ['viewMgr', 'View manager'], ['persp', 'Perspective'],
  ['planeDisp', 'Section display'], ['datums', 'Datum display'], ['annot', 'Annotation display'], ['spin', 'Spin center'],
  ['simulate', 'Simulate'], ['pause', 'Pause'], ['play', 'Resume'], ['ecadOn', 'ECAD display'], ['review', 'Review'],
]
const withMenu = ['render', 'shade', 'saved', 'planeDisp', 'datums']

function Viewport() {
  return (
    <main className="relative min-w-0 flex-1 bg-[#eae9ee]">
      <Scene />
      <div className="absolute inset-x-0 top-[5px] flex justify-center pl-[5px]">
        <div className="flex h-[29px] items-center border border-[#c8c8cd] bg-[#f9f8fd] px-0.5">
          {viewTools.map(([icon, label]) => (
            <button
              key={icon}
              aria-label={label}
              className={clsx(
                'flex h-[22px] w-6 items-center justify-center border',
                icon === 'annot' || icon === 'ecadOn' ? 'border-[#b5b5ba] bg-[#dcdce1]' : 'border-transparent'
              )}
            >
              <Icon name={icon} className="size-[15px]" />
              {withMenu.includes(icon) && (
                <svg viewBox="0 0 3 3" className="mt-[14px] size-[3px] shrink-0"><path d="M3 0v3H0z" fill="#444" /></svg>
              )}
            </button>
          ))}
        </div>
      </div>
    </main>
  )
}

function StatusBar() {
  return (
    <footer className="flex h-9 shrink-0 items-center border-y border-[#c6c6cc] bg-[#fdfcff] pl-[5px] pr-[11px] text-[11px] text-[#5c5d61]">
      <button aria-label="Navigator" className="flex h-[22px] w-5 items-center justify-center border border-[#b5b5ba] bg-[#dfdfe3]"><Icon name="navOn" className="size-[15px]" /></button>
      <button aria-label="Browser" className="ml-1"><Icon name="browser" /></button>
      <button aria-label="Full screen" className="ml-[7px]"><Icon name="fullscreen" /></button>
      <button aria-label="Model check" className="ml-[7px]"><Icon name="scanner" /></button>
      <span className="ml-2 h-[22px] w-px bg-[#cfcfd4]" />
      <p className="ml-[5px] flex items-center gap-[5px] pb-1 text-[10px]">
        <span className="size-1 rounded-full bg-[#17587a]" />
        Spin Center will not be displayed.
      </p>
      <div className="ml-auto flex items-center">
        <span className="h-7 w-px bg-[#b9b9be]" />
        <button aria-label="Board status" className="ml-px"><Icon name="flag" /></button>
        <span className="ml-[23px] h-7 w-[5px] border-x border-[#b9b9be]" />
        <div className="ml-px flex h-[22px] border border-[#b9b9be]">
          <button aria-label="Find" className="flex w-6 items-center justify-center"><Icon name="binoc" /></button>
          <button aria-label="Find options" className="flex w-[14px] items-center justify-center border-l border-[#cfcfd4]"><Caret /></button>
        </div>
        <span className="ml-0.5 h-7 w-px bg-[#b9b9be]" />
        <button aria-label="Selection buffer" className="ml-px flex h-[26px] w-[37px] items-center justify-center border border-[#b9b9be]"><Icon name="cubeBox" className="size-[17px]" /></button>
        <div className="relative ml-[88px]">
          <select aria-label="Selection filter" className="h-[22px] w-[164px] appearance-none border border-[#b9b9be] bg-[#f6f5fa] pl-1.5 text-[11px] leading-none outline-none">
            <option>Geometry</option>
          </select>
          <span className="pointer-events-none absolute inset-y-0 right-0 flex w-[14px] items-center justify-center border-l border-[#b9b9be]"><Caret /></span>
        </div>
      </div>
    </footer>
  )
}

export default function App() {
  return (
    <div className="flex h-screen flex-col overflow-hidden bg-[#fdfcff] font-['Open_Sans','Noto_Sans',sans-serif]">
      <TitleBar />
      <MenuBar />
      <Ribbon />
      <div className="flex min-h-0 flex-1">
        <ModelTree />
        <Viewport />
      </div>
      <StatusBar />
      <div className="h-[42px] shrink-0" />
    </div>
  )
}
